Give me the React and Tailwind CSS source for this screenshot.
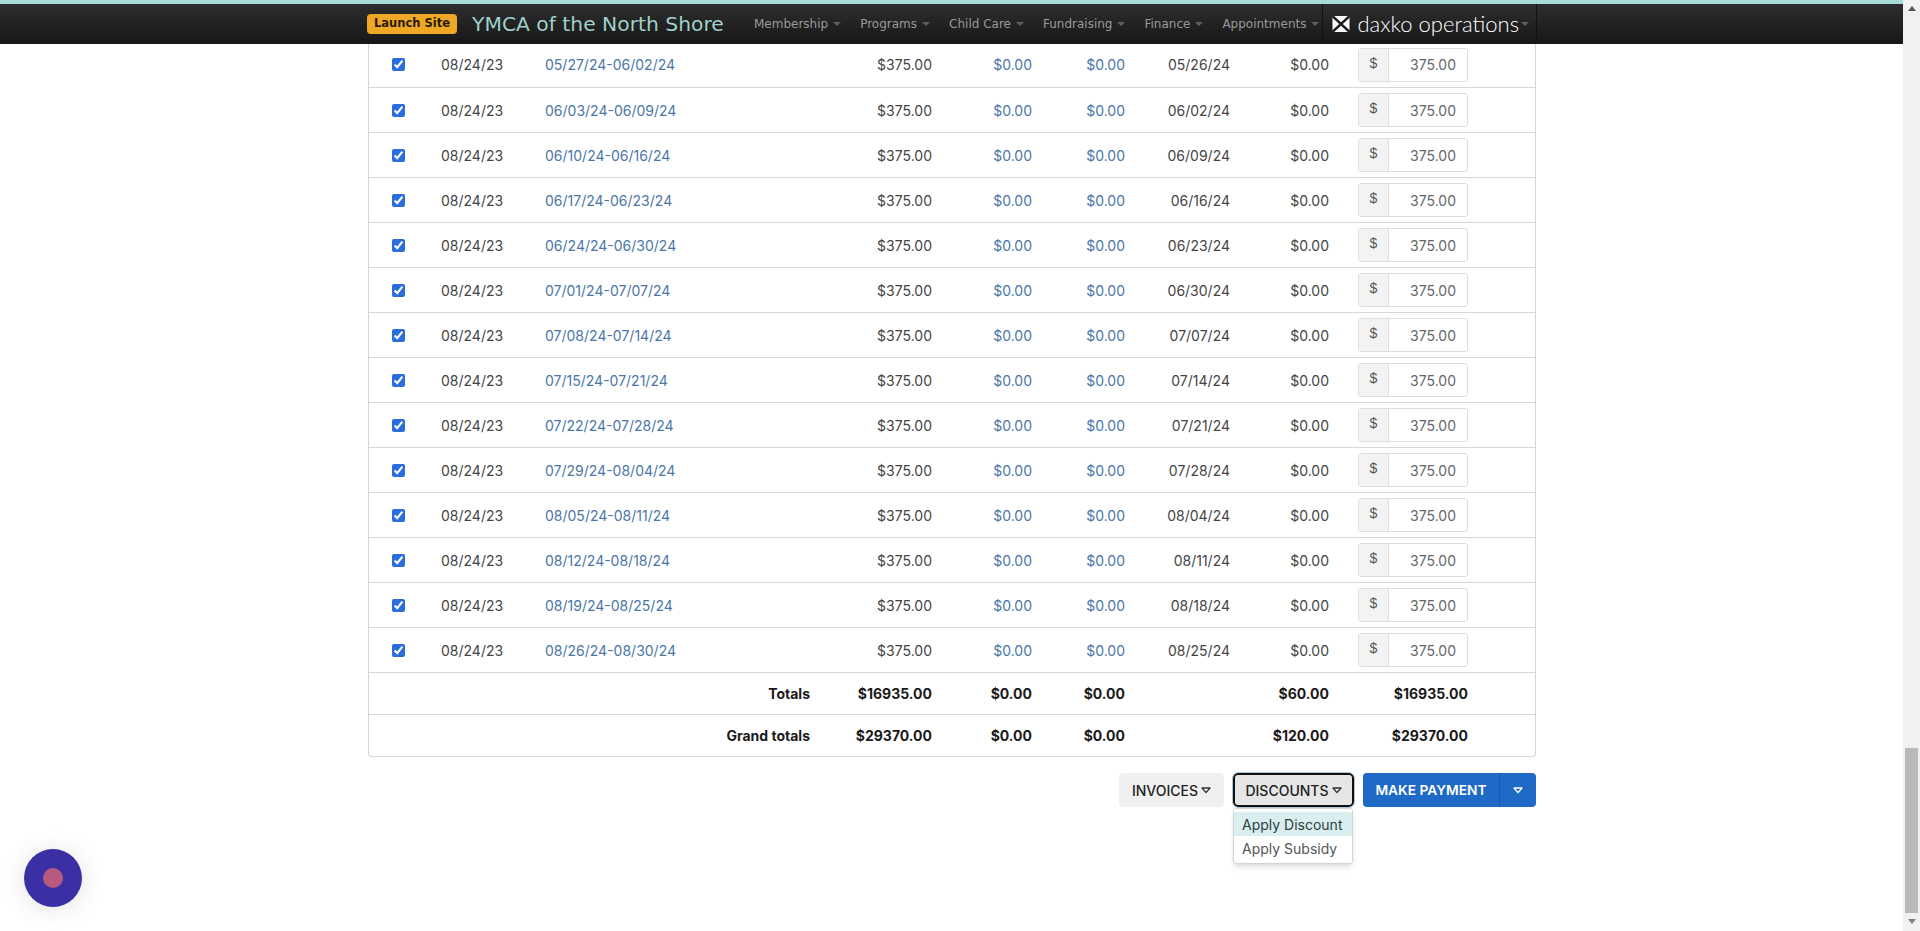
const rows = [
  ["05/27/24-06/02/24", "05/26/24"],
  ["06/03/24-06/09/24", "06/02/24"],
  ["06/10/24-06/16/24", "06/09/24"],
  ["06/17/24-06/23/24", "06/16/24"],
  ["06/24/24-06/30/24", "06/23/24"],
  ["07/01/24-07/07/24", "06/30/24"],
  ["07/08/24-07/14/24", "07/07/24"],
  ["07/15/24-07/21/24", "07/14/24"],
  ["07/22/24-07/28/24", "07/21/24"],
  ["07/29/24-08/04/24", "07/28/24"],
  ["08/05/24-08/11/24", "08/04/24"],
  ["08/12/24-08/18/24", "08/11/24"],
  ["08/19/24-08/25/24", "08/18/24"],
  ["08/26/24-08/30/24", "08/25/24"],
];

const navItems = [
  { label: "Membership", cls: "" },
  { label: "Programs", cls: "ml-[19px]" },
  { label: "Child Care", cls: "ml-[19px]" },
  { label: "Fundraising", cls: "ml-[19px]" },
  { label: "Finance", cls: "ml-[19px]" },
  { label: "Appointments", cls: "ml-[19px]" },
];

const NavCaret = () => (
  <span className="ml-[5px] inline-block w-0 h-0 border-x-[4px] border-x-transparent border-t-[4px] border-t-[#5f5f5f] align-middle" />
);

const BtnCaret = ({ color = "#333" }) => (
  <svg width="10" height="7" viewBox="0 0 10 7" className="ml-[3px]">
    <path d="M1 1h8L5 5.6z" fill="none" stroke={color} strokeWidth="1.3" strokeLinejoin="round" />
  </svg>
);

const Navbar = () => (
  <div className="relative z-10 h-[44px] shrink-0 border-t-[4px] border-[#a5dcd8] bg-gradient-to-b from-[#2e2e2e] to-[#171717] flex items-center pl-[367px] font-['DejaVu_Sans',sans-serif]">
    <div className="h-[20px] w-[90px] rounded-[4px] bg-[#efa825] text-[#2a1a02] text-[11.5px] font-bold flex items-center justify-center">
      Launch Site
    </div>
    <div className="ml-[15px] w-[282px] text-[20.3px] leading-none text-[#9fd0cb] whitespace-nowrap">
      YMCA of the North Shore
    </div>
    {navItems.map((item) => (
      <div key={item.label} className={`${item.cls} text-[12px] text-[#999] whitespace-nowrap flex items-center`}>
        {item.label}
        <NavCaret />
      </div>
    ))}
    <div className="ml-[3px] h-[40px] w-[215px] border-x border-[#111] flex items-center pl-[9px]">
      <svg width="18" height="16" viewBox="0 0 18 16">
        <rect x="0.5" y="0" width="17" height="16" rx="2" fill="#fff" />
        <path d="M1 0.5 17 15.5M17 0.5 1 15.5" stroke="#1c1c1c" strokeWidth="2.4" />
      </svg>
      <span className="ml-[7px] font-['Lato',sans-serif] font-light text-[22px] leading-none text-white whitespace-nowrap">
        daxko operations
      </span>
      <span className="ml-[2px] inline-block w-0 h-0 border-x-[4px] border-x-transparent border-t-[4px] border-t-[#5f5f5f]" />
    </div>
  </div>
);

const DataRow = ({ week, due }) => (
  <tr className="h-[45px] border-b border-[#d6d6d6] text-[#444] [&>td]:pt-px">
    <td className="text-center pr-[2px]">
      <input type="checkbox" defaultChecked className="accent-[#2a6ddc] align-middle mb-[3px]" />
    </td>
    <td className="px-3">08/24/23</td>
    <td className="pl-[11px] pr-3 text-[#4a76a8]">{week}</td>
    <td className="px-3 text-right">$375.00</td>
    <td className="px-3 text-right text-[#4a76a8]">$0.00</td>
    <td className="px-3 text-right text-[#4a76a8]">$0.00</td>
    <td className="px-3 text-right">{due}</td>
    <td className="px-3 text-right">$0.00</td>
    <td className="pl-[17px] pr-3">
      <div className="flex h-[34px] w-[110px] rounded-[3px] border border-[#dedede] overflow-hidden">
        <span className="w-[30px] shrink-0 bg-[#f3f3f3] border-r border-[#dedede] flex items-center justify-center pb-[3px] font-['Liberation_Sans',sans-serif] text-[#555]">
          $
        </span>
        <input
          readOnly
          value="375.00"
          className="w-full min-w-0 pr-[11px] text-right text-[#666] outline-none bg-white"
        />
      </div>
    </td>
    <td />
  </tr>
);

const TotalRow = ({ label, values, last }) => (
  <tr className={`h-[42px] font-bold text-[#1a1a1a] ${last ? "" : "border-b border-[#d6d6d6]"}`}>
    <td colSpan={3} className="px-3 text-right">{label}</td>
    <td className="px-3 text-right">{values[0]}</td>
    <td className="px-3 text-right">$0.00</td>
    <td className="px-3 text-right">$0.00</td>
    <td />
    <td className="px-3 text-right">{values[1]}</td>
    <td className="pr-3 text-right">{values[0]}</td>
    <td />
  </tr>
);

const Table = () => (
  <div className="-mt-[2px] ml-[368px] w-[1168px] border-x border-b border-[#d6d6d6] rounded-b-[4px]">
    <table className="w-[1166px] table-fixed border-collapse text-[14px]">
      <colgroup>
        <col className="w-[60px]" />
        <col className="w-[105px]" />
        <col className="w-[288px]" />
        <col className="w-[122px]" />
        <col className="w-[100px]" />
        <col className="w-[93px]" />
        <col className="w-[105px]" />
        <col className="w-[99px]" />
        <col className="w-[139px]" />
        <col className="w-[55px]" />
      </colgroup>
      <tbody>
        {rows.map((r) => (
          <DataRow key={r[0]} week={r[0]} due={r[1]} />
        ))}
        <TotalRow label="Totals" values={["$16935.00", "$60.00"]} />
        <TotalRow label="Grand totals" values={["$29370.00", "$120.00"]} last />
      </tbody>
    </table>
  </div>
);

const Actions = () => (
  <div className="mt-4 ml-[368px] w-[1168px] flex justify-end gap-[9px] text-[14px] font-medium">
    <button className="h-[34px] w-[105px] rounded-[4px] bg-[#f0f0f0] text-[#222] flex items-center justify-center">
      INVOICES
      <BtnCaret />
    </button>
    <div className="relative">
      <button className="h-[34px] w-[121px] rounded-[5px] bg-[#e6e6e6] text-[#222] border-2 border-[#111] outline outline-1 outline-[#a9c6dc] flex items-center justify-center">
        DISCOUNTS
        <BtnCaret />
      </button>
      <div className="absolute left-0 top-[35px] w-[120px] h-[56px] py-[3px] bg-white border border-[#d4d4d4] rounded-[3px] shadow-md font-normal">
        <div className="h-[24px] pl-2 flex items-center bg-[#d9eeee] text-[#2c3e40]">Apply Discount</div>
        <div className="h-[24px] pl-2 flex items-center text-[#555]">Apply Subsidy</div>
      </div>
    </div>
    <div className="flex h-[34px] w-[173px] rounded-[4px] bg-[#1f6ac6] text-white font-semibold">
      <button className="w-[137px] border-r border-[#185aa9] text-[13.75px]">MAKE PAYMENT</button>
      <button className="flex-1 flex items-center justify-center pr-[3px]">
        <BtnCaret color="#fff" />
      </button>
    </div>
  </div>
);

const ChatBubble = () => (
  <div className="absolute left-[24px] top-[849px] w-[58px] h-[58px] rounded-full bg-[#3b2fa5] shadow-[0_2px_24px_rgba(0,0,0,0.12)] flex items-center justify-center">
    <div className="w-[20px] h-[20px] rounded-full bg-[#b85a80]" />
  </div>
);

const Scrollbar = () => (
  <div className="w-[17px] shrink-0 h-full bg-[#f1f1f1] flex flex-col items-center">
    <span className="mt-[6px] w-0 h-0 border-x-[4px] border-x-transparent border-b-[5px] border-b-[#555]" />
    <div className="mt-[737px] w-[13px] h-[165px] bg-[#b9b9b9]" />
    <span className="mt-[6px] w-0 h-0 border-x-[4px] border-x-transparent border-t-[5px] border-t-[#808080]" />
  </div>
);

export default function App() {
  return (
    <div className="relative h-[931px] overflow-hidden flex bg-white font-['Inter',sans-serif]">
      <div className="flex-1 min-w-0">
        <Navbar />
        <Table />
        <Actions />
      </div>
      <Scrollbar />
      <ChatBubble />
    </div>
  );
}
